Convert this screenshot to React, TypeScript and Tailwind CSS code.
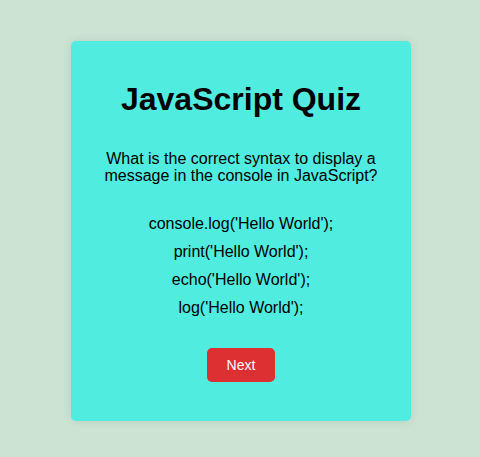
import React from 'react';

const options = [
  "console.log('Hello World');",
  "print('Hello World');",
  "echo('Hello World');",
  "log('Hello World');",
];

const App: React.FC = () => {
  return (
    <div className="min-h-screen bg-[#cce3d4] pt-[41px] font-['Liberation_Sans',Arial,sans-serif] text-black">
      <div className="mx-auto flex h-[380px] w-[340px] flex-col items-center rounded-[5px] bg-[#50ece0] px-5 pt-[40px] shadow-[0_0_10px_rgba(0,0,0,0.1)] translate-x-[1px]">
        <h1 className="text-[32px] font-bold leading-[37px]">JavaScript Quiz</h1>

        <p className="mt-[32px] text-center text-[16px] leading-[17px]">
          What is the correct syntax to display a message in the console in JavaScript?
        </p>

        <ul className="mt-[31px] flex flex-col items-center gap-[10px]">
          {options.map((opt) => (
            <li key={opt} className="text-[16px] leading-[18px]">
              {opt}
            </li>
          ))}
        </ul>

        <button className="mt-[31px] h-[34px] w-[68px] rounded-[5px] bg-[#dc3033] text-[14px] text-white">
          Next
        </button>
      </div>
    </div>
  );
};

export default App;
